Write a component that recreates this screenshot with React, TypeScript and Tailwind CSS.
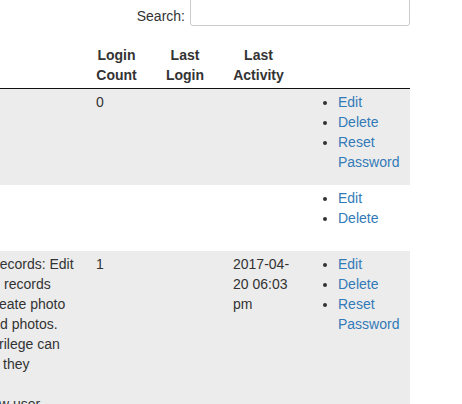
import React from "react";

interface UserRow {
  descLines: { text: string; offset: string }[];
  loginCount: string;
  lastLogin: string;
  lastActivity: string[];
  actions: string[];
  striped: boolean;
  rowClass?: string;
}

// Only the right end of the description column is in view; each line is offset
// so the clipped part lands where it does in the screenshot.
const rows: UserRow[] = [
  {
    descLines: [],
    loginCount: "0",
    lastLogin: "",
    lastActivity: [],
    actions: ["Edit", "Delete", "Reset Password"],
    striped: true,
  },
  {
    descLines: [],
    loginCount: "",
    lastLogin: "",
    lastActivity: [],
    actions: ["Edit", "Delete"],
    striped: false,
    rowClass: "h-[66px]",
  },
  {
    descLines: [
      { text: "records: Edit", offset: "ml-[-5px]" },
      { text: "records", offset: "ml-[4px]" },
      { text: "eate photo", offset: "ml-[-1px]" },
      { text: "d photos.", offset: "ml-[0px]" },
      { text: "rilege can", offset: "ml-[-1px]" },
      { text: "they", offset: "ml-[3px]" },
      { text: "\u00a0", offset: "ml-[0px]" },
      { text: "w user", offset: "ml-[-1px]" },
    ],
    loginCount: "1",
    lastLogin: "",
    lastActivity: ["2017-04-", "20 06:03", "pm"],
    actions: ["Edit", "Delete", "Reset Password"],
    striped: true,
  },
];

const headers: { top: string; bottom: string; pad: string }[] = [
  { top: "Login", bottom: "Count", pad: "px-[4px]" },
  { top: "Last", bottom: "Login", pad: "px-[4px]" },
  { top: "Last", bottom: "Activity", pad: "pl-[4px] pr-[10px]" },
];

export default function App() {
  return (
    <div className="w-[462px] h-[404px] overflow-hidden bg-white font-['Liberation_Sans',Arial,sans-serif] text-[14px] leading-[20px] text-[#333]">
      <div className="w-[410px]">
        {/* Search filter */}
        <div className="flex h-[30px] mt-[-4px] items-end justify-end gap-[5px]">
          <label htmlFor="search">Search:</label>
          <input
            id="search"
            type="search"
            className="w-[220px] h-[30px] rounded-[3px] border border-[#ccc] px-[10px] py-[5px] text-[12px] shadow-[inset_0_1px_1px_rgba(0,0,0,0.075)] outline-none"
          />
        </div>

        {/* Users table */}
        <table className="mt-[16px] w-[410px] table-fixed border-collapse">
          <colgroup>
            <col className="w-[92px]" />
            <col className="w-[49px]" />
            <col className="w-[88px]" />
            <col className="w-[65px]" />
            <col className="w-[116px]" />
          </colgroup>
          <thead>
            <tr className="border-b border-[#111]">
              <th className="px-[4px] py-[3px]" />
              {headers.map((h, i) => (
                <th
                  key={i}
                  className={`${h.pad} py-[3px] text-center align-bottom font-bold`}
                >
                  <div>{h.top}</div>
                  <div>{h.bottom}</div>
                </th>
              ))}
              <th className="px-[4px] py-[3px]" />
            </tr>
          </thead>
          <tbody>
            {rows.map((row, i) => (
              <tr
                key={i}
                className={`${row.striped ? "bg-[#ececec]" : "bg-white"} ${row.rowClass ?? ""}`}
              >
                <td className="pl-0 pr-[4px] py-[3px] align-top overflow-hidden">
                  {row.descLines.map((line, j) => (
                    <div key={j} className={`whitespace-nowrap ${line.offset}`}>
                      {line.text}
                    </div>
                  ))}
                </td>
                <td className="px-[4px] py-[3px] align-top">{row.loginCount}</td>
                <td className="px-[4px] py-[3px] align-top">{row.lastLogin}</td>
                <td className="px-[4px] py-[3px] align-top">
                  {row.lastActivity.map((part, j) => (
                    <div key={j} className="whitespace-nowrap">
                      {part}
                    </div>
                  ))}
                </td>
                <td className="px-[4px] py-[3px] align-top">
                  <ul className="list-disc pl-[40px] mt-0 mb-[10px]">
                    {row.actions.map((action) => (
                      <li key={action}>
                        <a href="#" className="text-[#337ab7] no-underline">
                          {action}
                        </a>
                      </li>
                    ))}
                  </ul>
                </td>
              </tr>
            ))}
          </tbody>
        </table>
      </div>
    </div>
  );
}
